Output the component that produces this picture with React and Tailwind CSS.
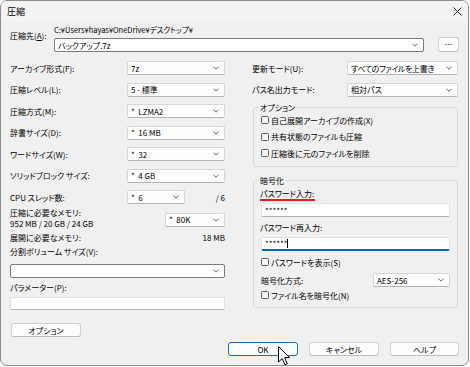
import React from 'react';

const Chevron = () => (
  <svg width="6" height="4" viewBox="0 0 6 4" className="shrink-0">
    <path d="M0.5 0.7 L3 3.2 L5.5 0.7" stroke="#3a3a3a" strokeWidth="0.8" fill="none" />
  </svg>
);

// read-only combo (light border), editable combo (dark border)
const Select = ({ className = '', children, dark = false }) => (
  <div
    className={`h-[14px] flex items-center justify-between pl-[3px] pr-[5px] rounded-[2px] border whitespace-pre ${
      dark ? 'bg-white border-[#7a7a7a]' : 'bg-[#fdfdfd] border-[#d6d6d6] border-b-[#b4b4b4]'
    } ${className}`}
  >
    <span>{children}</span>
    <Chevron />
  </div>
);

const Check = ({ children }) => (
  <div className="h-[11px] flex items-center gap-[2px]">
    <span className="w-[8px] h-[8px] rounded-[1.5px] border border-[#5a5a5a] bg-[#f6f6f6]" />
    <span>{children}</span>
  </div>
);

const Button = ({ className = '', children, primary = false }) => (
  <div
    className={`h-[14px] flex items-center justify-center rounded-[3px] bg-[#fdfdfd] border ${
      primary ? 'border-[#0f6cc8]' : 'border-[#d0d0d0] border-b-[#bcbcbc]'
    } ${className}`}
  >
    {children}
  </div>
);

const Row = ({ label, children }) => (
  <div className="h-[14px] flex items-center justify-between">
    <span>{label}</span>
    {children}
  </div>
);

export default function App() {
  return (
    <div className="w-[470px] h-[367px] bg-white overflow-hidden text-black text-[8px] leading-[11px] [font-family:'Noto_Sans_CJK_JP',sans-serif] [font-feature-settings:'palt']">
      <div className="w-[469px] h-[366px] bg-[#f0f0f0] border border-[#8c8c8c] rounded-[7px] overflow-hidden">
        {/* title bar */}
        <div className="h-[21px] bg-[#f3f3f3] flex items-center justify-between pl-[6px] pr-[6px]">
          <span className="text-[9px]">圧縮</span>
          <svg width="9" height="9" viewBox="0 0 9 9">
            <path d="M0.5 0.5 L8.5 8.5 M8.5 0.5 L0.5 8.5" stroke="#1a1a1a" strokeWidth="0.9" />
          </svg>
        </div>

        <div className="px-[9px]">
          {/* destination */}
          <div className="flex pt-[2px]">
            <div className="w-[44px] pt-[6px]">圧縮先(<span className="underline">A</span>):</div>
            <div className="w-[370px]">
              <div className="mt-[1px] text-[7.5px] leading-[10px]">C:¥Users¥hayas¥OneDrive¥デスクトップ¥</div>
              <Select dark className="mt-[3px]">バックアップ.7z</Select>
            </div>
            <Button className="ml-[14px] mt-[13px] w-[21px] h-[15px]">…</Button>
          </div>

          <div className="flex mt-[9px]">
            {/* left column */}
            <div className="w-[215px] flex flex-col">
              <div className="flex flex-col gap-[7.5px]">
                <Row label="アーカイブ形式(F):"><Select className="w-[98px]">7z</Select></Row>
                <Row label="圧縮レベル(L):"><Select className="w-[98px]">5 - 標準</Select></Row>
                <Row label="圧縮方式(M):"><Select className="w-[98px]">{'*  LZMA2'}</Select></Row>
                <Row label="辞書サイズ(D):"><Select className="w-[98px]">{'*  16 MB'}</Select></Row>
                <Row label="ワードサイズ(W):"><Select className="w-[98px]">{'*  32'}</Select></Row>
                <Row label="ソリッドブロック サイズ:"><Select className="w-[98px]">{'*  4 GB'}</Select></Row>
                <div className="h-[14px] flex items-center">
                  <span className="w-[117px]">CPU スレッド数:</span>
                  <Select className="w-[58px]">{'*  6'}</Select>
                  <span className="ml-auto">/ 6</span>
                </div>
              </div>

              <div className="mt-[2.5px] flex items-end justify-between">
                <div>
                  <div>圧縮に必要なメモリ:</div>
                  <div>952 MB / 20 GB / 24 GB</div>
                </div>
                <Select className="w-[60px] h-[13px] mb-[2px]">{'*  80K'}</Select>
              </div>
              <div className="mt-[3px] flex justify-between">
                <span>展開に必要なメモリ:</span>
                <span>18 MB</span>
              </div>
              <div className="mt-[3px]">分割ボリューム サイズ(V):</div>
              <Select dark className="mt-[7.5px] w-[215px]"></Select>
              <div className="mt-[3.5px]">パラメーター(P):</div>
              <div className="mt-[4.5px] h-[13px] bg-white border border-[#e0e0e0] border-b-[#b8b8b8] rounded-[2px]" />
              <Button className="mt-[13px] ml-[1px] w-[70px]">オプション</Button>
            </div>

            {/* right column */}
            <div className="w-[206px] ml-[27px] flex flex-col">
              <Row label="更新モード(U):">
                <Select className="w-[111px] tracking-[-0.4px]">すべてのファイルを上書き</Select>
              </Row>
              <div className="mt-[7.5px]">
                <Row label="パス名出力モード:"><Select className="w-[111px]">相対パス</Select></Row>
              </div>

              <fieldset className="mt-[5px] ml-[1px] border border-[#d9d9d9] rounded-[3px]">
                <legend className="ml-[5px] px-[1px]">オプション</legend>
                <div className="pl-[7px] pt-[2px] pb-[7.5px] flex flex-col gap-[5.5px]">
                  <Check>自己展開アーカイブの作成(X)</Check>
                  <Check>共有状態のファイルも圧縮</Check>
                  <Check>圧縮後に元のファイルを削除</Check>
                </div>
              </fieldset>

              <fieldset className="mt-[7.5px] ml-[1px] border border-[#d9d9d9] rounded-[3px]">
                <legend className="ml-[5px] px-[1px]">暗号化</legend>
                <div className="pl-[6px] pr-[7px] pb-[6.5px] flex flex-col">
                  <div className="mt-[2px] h-[11px] flex">
                    <span className="border-b-[2px] border-[#e3201b] pr-[1px] h-[13px]">パスワード入力:</span>
                  </div>
                  <div className="mt-[4.5px] ml-[1px] h-[14px] flex items-center pl-[3px] bg-white border border-[#e2e2e2] border-b-[#b0b0b0] rounded-[2px]">
                    ******
                  </div>
                  <div className="mt-[4.5px]">パスワード再入力:</div>
                  <div className="mt-[4.5px] ml-[1px] h-[14px] flex items-center pl-[3px] bg-white border border-[#e2e2e2] border-b-[2px] border-b-[#0067c0] rounded-[2px]">
                    <span>******</span>
                    <span className="w-[1px] h-[9px] bg-black" />
                  </div>
                  <div className="mt-[5.5px] ml-[1px]"><Check>パスワードを表示(S)</Check></div>
                  <div className="mt-[5.5px] ml-[1px] h-[14px] flex items-center justify-between">
                    <span>暗号化方式:</span>
                    <Select className="w-[77px]">AES-256</Select>
                  </div>
                  <div className="mt-[2.5px] ml-[1px]"><Check>ファイル名を暗号化(N)</Check></div>
                </div>
              </fieldset>
            </div>
          </div>

          {/* dialog buttons */}
          <div className="mt-[5px] flex justify-end gap-[11px]">
            <div className="relative">
              <Button primary className="w-[70px]">OK</Button>
              <svg
                width="13"
                height="20"
                viewBox="0 0 13 20"
                className="absolute left-[50px] top-[4px]"
              >
                <path d="M0.5 0.5 L0.5 16 L4.2 12.5 L7 18.8 L9.3 17.8 L6.6 11.6 L11.6 11.6 Z" fill="white" stroke="black" strokeWidth="1" strokeLinejoin="round" />
              </svg>
            </div>
            <Button className="w-[70px]">キャンセル</Button>
            <Button className="w-[69px]">ヘルプ</Button>
          </div>
        </div>
      </div>
    </div>
  );
}
